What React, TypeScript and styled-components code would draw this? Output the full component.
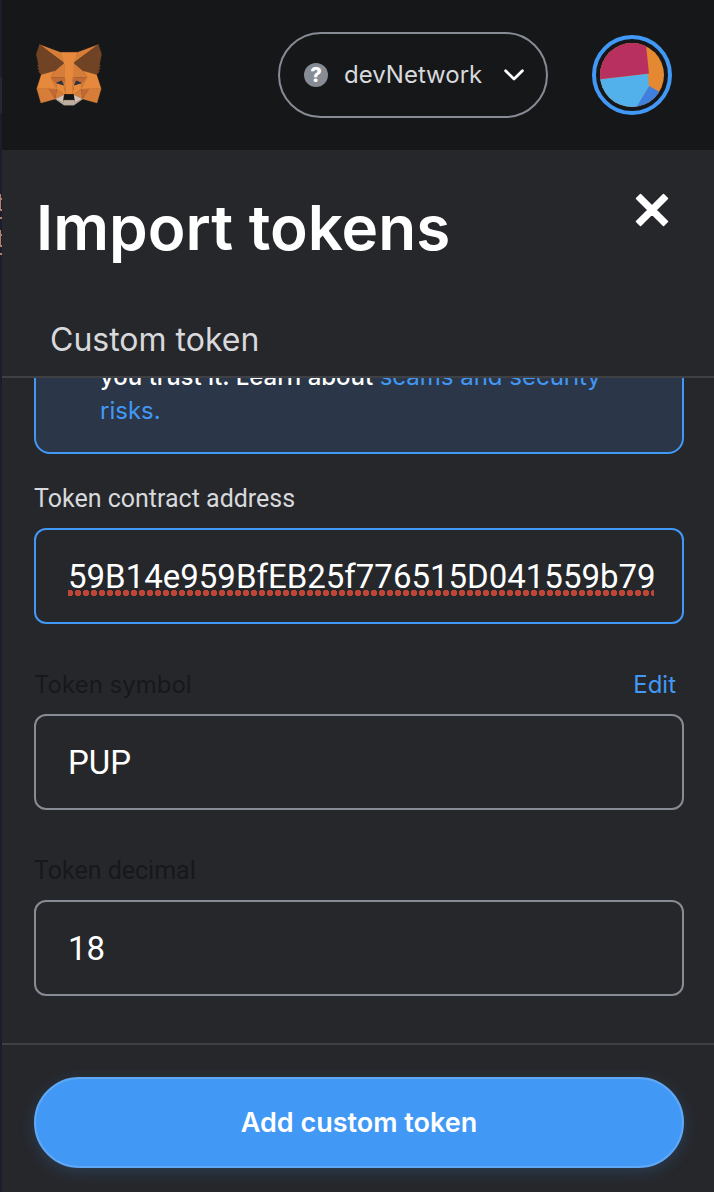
import React, { useId, useState } from 'react';
import styled, { createGlobalStyle } from 'styled-components';

const color = {
  header: '#161719',
  panel: '#26272b',
  edge: '#1d1b2e',
  line: '#3e4043',
  border: '#868b94',
  text: '#ffffff',
  soft: '#d8d9dc',
  dim: '#17181a',
  blue: '#4298f5',
  info: '#2b3748',
};

const display = "Inter, 'Liberation Sans', sans-serif";
const body = "Roboto, 'Liberation Sans', sans-serif";

const GlobalStyle = createGlobalStyle`
  *, *::before, *::after { box-sizing: border-box; }
  body { margin: 0; background: ${color.panel}; }
  button, input { font: inherit; margin: 0; }
`;

const Window = styled.div`
  display: flex;
  height: 100vh;
  background: ${color.panel};
`;

const Backdrop = styled.div`
  flex: 0 0 2px;
  background: ${color.edge};
  svg { display: block; }
`;

const Popup = styled.div`
  flex: 1;
  min-width: 0;
  display: flex;
  flex-direction: column;
  color: ${color.text};
  font-family: ${display};
`;

const TopBar = styled.header`
  flex: none;
  height: 150px;
  padding: 0 42px 0 34px;
  display: flex;
  align-items: center;
  gap: 44px;
  background: ${color.header};
`;

const PlainButton = styled.button`
  padding: 0;
  border: 0;
  background: none;
  color: inherit;
  display: flex;
  cursor: pointer;
`;

const NetworkButton = styled(PlainButton)`
  margin-left: auto;
  height: 86px;
  width: 270px;
  padding: 0 22px 0 24px;
  align-items: center;
  gap: 16px;
  border: 2px solid ${color.border};
  border-radius: 43px;
  color: ${color.soft};
  font-size: 24px;
  line-height: 32px;
  svg { flex: none; }
`;

const NetworkName = styled.span`
  flex: 1;
  text-align: left;
  white-space: nowrap;
`;

const UnknownBadge = styled.span`
  flex: none;
  width: 24px;
  height: 24px;
  border-radius: 50%;
  background: ${color.border};
  color: ${color.text};
  font-size: 20px;
  font-weight: 800;
  line-height: 24px;
  text-align: center;
`;

const AccountButton = styled(PlainButton)`
  padding: 4px;
  border: 4px solid ${color.blue};
  border-radius: 50%;
`;

const PageHead = styled.div`
  flex: none;
  display: flex;
  align-items: flex-start;
  justify-content: space-between;
  padding: 40px 42px 0 34px;
`;

const Title = styled.h1`
  margin: 0;
  font-size: 62px;
  font-weight: 600;
  line-height: 76px;
`;

const CloseButton = styled(PlainButton)`
  padding: 3px;
`;

const Tabs = styled.div`
  flex: none;
  display: flex;
  padding: 48px 16px 10px;
  border-bottom: 2px solid ${color.line};
`;

const Tab = styled(PlainButton)`
  padding: 6px 32px;
  color: ${color.soft};
  font-size: 32px;
  line-height: 40px;
`;

const FormArea = styled.form`
  flex: 1;
  min-height: 0;
  overflow: hidden;
  display: flex;
  flex-direction: column;
  justify-content: flex-end;
  gap: 44px;
  padding: 0 30px 47px 32px;
`;

const Notice = styled.p`
  flex: none;
  margin: 0 0 -16px;
  padding: 24px 64px;
  border: 2px solid ${color.blue};
  border-radius: 16px;
  background: ${color.info};
  font-size: 24px;
  font-weight: 500;
  line-height: 34px;
  a {
    color: ${color.blue};
    font-weight: 400;
    text-decoration: none;
  }
`;

const FieldBox = styled.div`
  flex: none;
  display: flex;
  flex-direction: column;
  gap: 12px;
`;

const LabelRow = styled.div`
  display: flex;
  justify-content: space-between;
  padding-right: 8px;
  font-size: 24px;
  line-height: 34px;
`;

const Label = styled.label<{ $dim?: boolean; $display?: boolean }>`
  color: ${(p) => (p.$dim ? color.dim : color.soft)};
  font-family: ${(p) => (p.$display ? display : body)};
  font-size: ${(p) => (p.$display ? 24 : 25)}px;
`;

const EditButton = styled(PlainButton)`
  color: ${color.blue};
`;

const TextInput = styled.input<{ $active?: boolean }>`
  width: 100%;
  height: 96px;
  padding: 0 28px 0 32px;
  border: 2px solid ${(p) => (p.$active ? color.blue : color.border)};
  border-radius: 12px;
  outline: none;
  color: ${color.text};
  font-family: ${body};
  font-size: 33px;
  background: ${(p) =>
    p.$active
      ? 'radial-gradient(circle at 4px 4px, #bd4637 0 2px, #bd4637 3px, transparent 3px) -2px 59px / 8px 8px repeat-x content-box content-box'
      : 'transparent'};
`;

const Footer = styled.footer`
  flex: none;
  padding: 32px 30px 24px 32px;
  border-top: 2px solid ${color.line};
`;

const SubmitButton = styled.button`
  display: block;
  width: 100%;
  height: 91px;
  border: 2px solid #5ea8f6;
  border-radius: 46px;
  background: ${color.blue};
  box-shadow: 0 4px 16px rgba(66, 152, 245, 0.2);
  color: ${color.text};
  font-size: 27px;
  font-weight: 600;
  cursor: pointer;
`;

const foxShapes: [string, string][] = [
  ['#d67e39', '274.1,35.5 174.6,109.4 193,65.8'],
  ['#d67e39', '44.4,35.5 143.1,110.1 125.6,65.8'],
  ['#d67e39', '238.3,206.8 211.8,247.4 268.5,263 284.8,207.7'],
  ['#d67e39', '33.9,207.7 50.1,263 106.8,247.4 80.3,206.8'],
  ['#d67e39', '103.6,138.2 87.8,162.1 144.1,164.6 142.1,104.1'],
  ['#d67e39', '214.9,138.2 175.9,103.4 174.6,164.6 230.8,162.1'],
  ['#d67e39', '106.8,247.4 140.6,230.9 111.4,208.1'],
  ['#d67e39', '177.9,230.9 211.8,247.4 207.1,208.1'],
  ['#d5c2b5', '211.8,247.4 177.9,230.9 180.6,253 180.3,262.3'],
  ['#d5c2b5', '106.8,247.4 138.3,262.3 138.1,253 140.6,230.9'],
  ['#c16a35', '106.8,247.4 111.6,206.8 80.3,207.7'],
  ['#c16a35', '207,206.8 211.8,247.4 238.3,207.7'],
  ['#c16a35', '230.8,162.1 174.6,164.6 179.8,193.5 188.1,176.1 208.1,185.2'],
  ['#c16a35', '110.6,185.2 130.6,176.1 138.8,193.5 144.1,164.6 87.8,162.1'],
  ['#d67e39', '87.8,162.1 111.4,208.1 110.6,185.2'],
  ['#d67e39', '208.1,185.2 207.1,208.1 230.8,162.1'],
  ['#d67e39', '144.1,164.6 138.8,193.5 145.4,227.6 146.9,182.7'],
  ['#d67e39', '174.6,164.6 171.9,182.6 173.1,227.6 179.8,193.5'],
  ['#e6893c', '179.8,193.5 173.1,227.6 177.9,230.9 207.1,208.1 208.1,185.2'],
  ['#e6893c', '110.6,185.2 111.4,208.1 140.6,230.9 145.4,227.6 138.8,193.5'],
  ['#283447', '138.8,193.5 110.6,185.2 130.5,176.1'],
  ['#283447', '179.7,193.5 188,176.1 208,185.2'],
  ['#bdaea0', '180.3,262.3 180.6,253 178.1,250.8 140.4,250.8 138.1,253 138.3,262.3 106.8,247.4 117.8,256.4 140.1,271.9 178.4,271.9 200.8,256.4 211.8,247.4'],
  ['#161616', '177.9,230.9 173.1,227.6 145.4,227.6 140.6,230.9 138.1,253 140.4,250.8 178.1,250.8 180.6,253'],
  ['#6f4323', '278.3,114.2 286.8,73.4 274.1,35.5 177.9,106.9 214.9,138.2 267.2,153.5 278.8,140 273.8,136.4 281.8,129.1 275.6,124.3 283.6,118.2'],
  ['#6f4323', '31.8,73.4 40.3,114.2 34.9,118.2 42.9,124.3 36.8,129.1 44.8,136.4 39.8,140 51.3,153.5 103.6,138.2 140.6,106.9 44.4,35.5'],
  ['#e6893c', '267.2,153.5 214.9,138.2 230.8,162.1 207.1,208.1 238.3,207.7 284.8,207.7'],
  ['#e6893c', '103.6,138.2 51.3,153.5 33.9,207.7 80.3,207.7 111.4,208.1 87.8,162.1'],
  ['#e6893c', '174.6,164.6 177.9,106.9 193.1,65.8 125.6,65.8 140.6,106.9 144.1,164.6 145.3,182.8 145.4,227.6 173.1,227.6 173.3,182.8'],
];

const FoxLogo = () => (
  <svg width="66" height="62" viewBox="31 35 257 238" aria-hidden="true">
    {foxShapes.map(([fill, points]) => (
      <polygon key={points} fill={fill} stroke={fill} strokeWidth="1" strokeLinejoin="round" points={points} />
    ))}
  </svg>
);

const Chevron = () => (
  <svg width="20" height="12" viewBox="0 0 20 12" fill="none" aria-hidden="true">
    <path d="M1.6 1.8 10 10l8.4-8.2" stroke="#fff" strokeWidth="2.8" strokeLinecap="round" strokeLinejoin="round" />
  </svg>
);

const Identicon = () => {
  const clip = useId();
  return (
    <svg width="64" height="64" viewBox="0 0 64 64" aria-hidden="true">
      <clipPath id={clip}>
        <circle cx="32" cy="32" r="32" />
      </clipPath>
      <g clipPath={`url(#${clip})`}>
        <rect width="64" height="64" fill="#e48932" />
        <path d="M0 36.3 47.7 30.8 49 43.2 37 64H0z" fill="#52b1ea" />
        <path d="M49.2 43 64 51.5V64H36.5z" fill="#3f7fdd" />
        <path d="M0 0h45.8L49 30.5 0 36.3z" fill="#b73060" />
      </g>
    </svg>
  );
};

const CloseIcon = () => (
  <svg width="34" height="34" viewBox="0 0 34 34" aria-hidden="true">
    <path
      d="M5.5 1.5 17 13 28.5 1.5l4 4L21 17l11.5 11.5-4 4L17 21 5.5 32.5l-4-4L13 17 1.5 5.5z"
      fill="#fff"
      stroke="#fff"
      strokeWidth="1.6"
      strokeLinejoin="round"
    />
  </svg>
);

const EditorSliver = () => (
  <svg width="2" height="260" viewBox="0 0 2 260" aria-hidden="true">
    <rect y="77" width="2" height="36" fill="#272635" />
    <path d="M0 194h1v4h1v2H1v9h1v2H0zM0 217h2v2H0zM0 230h1v4h1v2H1v9h1v2H0zM0 253h2v2H0z" fill="#b5806a" />
  </svg>
);

interface FieldProps {
  label: string;
  initial: string;
  active?: boolean;
  dim?: boolean;
  display?: boolean;
  action?: React.ReactNode;
}

const Field = ({ label, initial, active, dim, display: useDisplay, action }: FieldProps) => {
  const id = useId();
  const [value, setValue] = useState(initial);
  return (
    <FieldBox>
      <LabelRow>
        <Label htmlFor={id} $dim={dim} $display={useDisplay}>{label}</Label>
        {action}
      </LabelRow>
      <TextInput
        id={id}
        type="text"
        $active={active}
        spellCheck={false}
        value={value}
        onChange={(e) => setValue(e.target.value)}
      />
    </FieldBox>
  );
};

export default function App() {
  return (
    <>
      <GlobalStyle />
      <Window>
        <Backdrop><EditorSliver /></Backdrop>
        <Popup>
          <TopBar>
            <FoxLogo />
            <NetworkButton type="button">
              <UnknownBadge>?</UnknownBadge>
              <NetworkName>devNetwork</NetworkName>
              <Chevron />
            </NetworkButton>
            <AccountButton type="button" aria-label="Account">
              <Identicon />
            </AccountButton>
          </TopBar>
          <PageHead>
            <Title>Import tokens</Title>
            <CloseButton type="button" aria-label="Close"><CloseIcon /></CloseButton>
          </PageHead>
          <Tabs>
            <Tab type="button">Custom token</Tab>
          </Tabs>
          <FormArea id="token-form" onSubmit={(e) => e.preventDefault()}>
            <Notice>
              you trust it. Learn about <a href="#risks">scams and security risks.</a>
            </Notice>
            <Field label="Token contract address" initial="59B14e959BfEB25f776515D041559b79" active />
            <Field
              label="Token symbol"
              initial="PUP"
              dim
              display
              action={<EditButton type="button">Edit</EditButton>}
            />
            <Field label="Token decimal" initial="18" dim />
          </FormArea>
          <Footer>
            <SubmitButton type="submit" form="token-form">Add custom token</SubmitButton>
          </Footer>
        </Popup>
      </Window>
    </>
  );
}
